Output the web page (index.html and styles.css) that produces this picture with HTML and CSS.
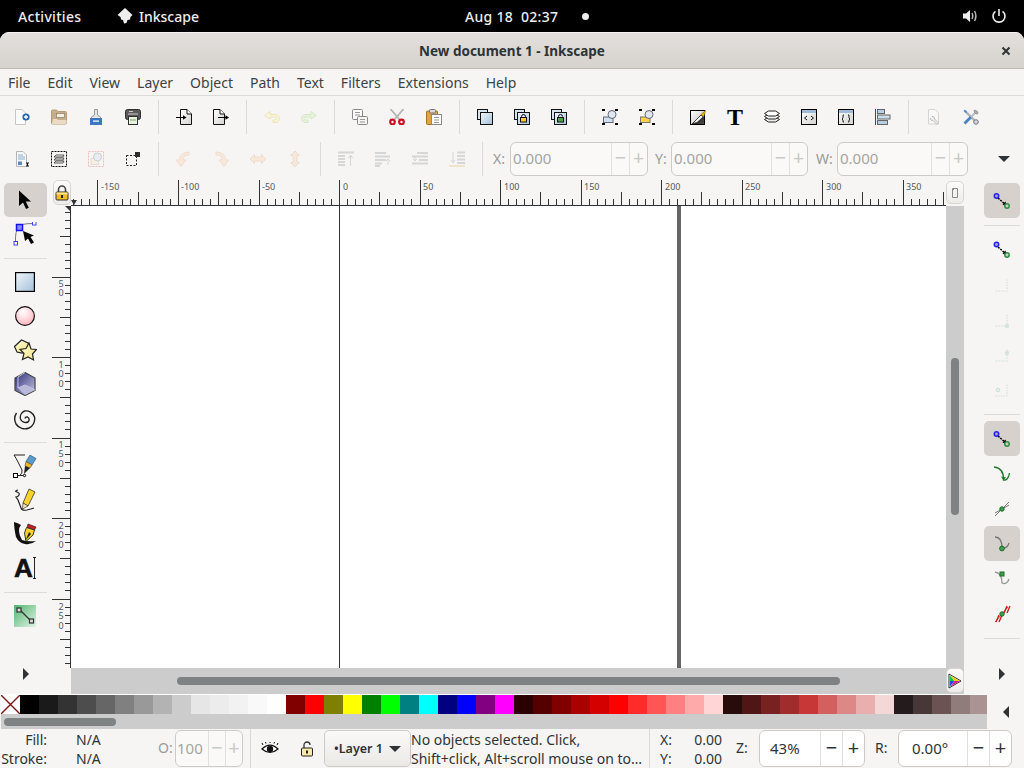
FILE: index.html
```html
<!DOCTYPE html>
<html lang="en">
<head>
  <meta charset="UTF-8">
  <title>New document 1 - Inkscape</title>
  <link rel="stylesheet" href="styles.css">
</head>
<body>

  <svg class="defs" aria-hidden="true">
    <defs>
      <linearGradient id="g-blue" x1="0" y1="0" x2="1" y2="1"><stop offset="0" stop-color="#f2f6fa"/><stop offset="1" stop-color="#a3c0da"/></linearGradient>
      <linearGradient id="g-gray" x1="0" y1="0" x2="1" y2="1"><stop offset="0" stop-color="#fff"/><stop offset="1" stop-color="#d2d2d0"/></linearGradient>
      <linearGradient id="g-green" x1="0" y1="0" x2="1" y2="1"><stop offset="0" stop-color="#4fb56e"/><stop offset="1" stop-color="#e4f3e8"/></linearGradient>
      <linearGradient id="g-pen" x1="0" y1="0" x2="1" y2="1"><stop offset="0" stop-color="#fff"/><stop offset="0.5" stop-color="#ddd"/><stop offset="0.51" stop-color="#222"/><stop offset="1" stop-color="#555"/></linearGradient>
      <radialGradient id="g-pink" cx="0.4" cy="0.3" r="0.8"><stop offset="0" stop-color="#fff"/><stop offset="1" stop-color="#ffadb8"/></radialGradient>
      <linearGradient id="g-star" x1="0" y1="0" x2="1" y2="1"><stop offset="0" stop-color="#fffde0"/><stop offset="1" stop-color="#f5e27a"/></linearGradient>
      <linearGradient id="g-box" x1="0" y1="0" x2="1" y2="1"><stop offset="0" stop-color="#2f2f78"/><stop offset="1" stop-color="#c8c8e4"/></linearGradient>
    </defs>
  </svg>

  <header class="topbar">
    <span class="topbar-item activities">Activities</span>
    <svg class="app-logo" width="16" height="16" viewBox="0 0 16 16"><path d="M8 0l7.500 7-2 2-.5 2.500-2.500.5-1 3-2.500.5-1-3.500-2-.5-.5-2.500L.5 7z" fill="#eee"/></svg>
    <span class="topbar-item app-name">Inkscape</span>
    <span class="topbar-item clock">Aug 18&nbsp; 02:37</span>
    <span class="status-dot"></span>
    <svg class="tray-volume" width="16" height="16" viewBox="0 0 16 16"><path d="M1 5.500h3L8 2v12L4 10.500H1z" fill="#eee"/><path d="M10 5q1.500 3 0 6M12.500 3q2.800 5 0 10" fill="none" stroke="#bbb" stroke-width="1.500"/></svg>
    <svg class="tray-power" width="16" height="16" viewBox="0 0 16 16"><path d="M4.500 3.300a6 6 0 1 0 7 0" fill="none" stroke="#eee" stroke-width="1.600"/><path d="M8 1v7" stroke="#eee" stroke-width="1.600"/></svg>
  </header>

  <div class="window">
    <div class="titlebar">
      <span class="title">New document 1 - Inkscape</span>
      <svg class="close" width="10" height="10" viewBox="0 0 10 10"><path d="M1.500 1.500l7 7M8.500 1.500l-7 7" stroke="#2e3436" stroke-width="2"/></svg>
    </div>

    <nav class="menubar">
      <span class="menu-item">File</span>
      <span class="menu-item">Edit</span>
      <span class="menu-item">View</span>
      <span class="menu-item">Layer</span>
      <span class="menu-item">Object</span>
      <span class="menu-item">Path</span>
      <span class="menu-item">Text</span>
      <span class="menu-item">Filters</span>
      <span class="menu-item">Extensions</span>
      <span class="menu-item">Help</span>
    </nav>

    <!-- commands toolbar -->
    <div class="toolbar">
      <span class="tool"><svg width="16" height="16" viewBox="-1 0 16 16"><path d="M.5.500H7l3.500 3.500v11.500H.5z" fill="#fbfbfb" stroke="#c6c6c6"/><circle cx="11" cy="8" r="3.600" fill="#2566ad"/><path d="M11 6v4M9 8h4" stroke="#fff" stroke-width="1.300"/></svg></span>
      <span class="tool"><svg width="16" height="16" viewBox="0 0 16 16"><path d="M.5 2q0-1 1-1h4l1.500 1.500h7.500q1 0 1 1V14q0 1-1 1h-13q-1 0-1-1z" fill="#c7ae8a" stroke="#b59c78"/><rect x="5.500" y="4.500" width="8" height="4" fill="#f4efe6" stroke="#8d7a5d" stroke-width=".7"/><path d="M1 15l1-5h4l1 1h8.500v3q0 1-1 1z" fill="#eadcc4"/></svg></span>
      <span class="tool"><svg width="16" height="16" viewBox="0 0 16 16"><path d="M6.500.5h3v5.500l3 2v2h-9V8l3-2z" fill="#e4e4e4" stroke="#999"/><path d="M2 9h12v7H2z" fill="#3c76bf"/><path d="M5 11.500h6v1.200H5z" fill="#fff"/></svg></span>
      <span class="tool"><svg width="16" height="16" viewBox="0 0 16 16"><rect x=".5" y=".5" width="15" height="10" rx="2" fill="#5a5a5a" stroke="#2e2e2e"/><path d="M4 2.500h4M3 5h10" stroke="#ccc"/><rect x="3.500" y="7.500" width="9" height="8" fill="#e9f1e2" stroke="#2e2e2e"/><path d="M5 10h6v2H5z" fill="#a9cf9c"/></svg></span>
      <span class="sep"></span>
      <span class="tool"><svg width="16" height="16" viewBox="0 0 16 16"><path d="M4.500.5H11l4.500 4.500v10.500h-11z" fill="url(#g-gray)" stroke="#111"/><path d="M11 .5V5h4.500" fill="#fff" stroke="#111"/><path d="M0 8.500h7" stroke="#000"/><path d="M7 6.300l3.500 2.200L7 10.700z"/></svg></span>
      <span class="tool"><svg width="16" height="16" viewBox="0 0 16 16"><path d="M.5.500H7l4.500 4.500v10.500H.5z" fill="url(#g-gray)" stroke="#111"/><path d="M7 .5V5h4.500" fill="#fff" stroke="#111"/><path d="M5 8.500h8" stroke="#000"/><path d="M12.500 6.300l3.500 2.200-3.500 2.200z"/></svg></span>
      <span class="sep"></span>
      <span class="tool"><svg width="16" height="16" viewBox="0 0 16 16"><path d="M6 2.500L.8 6.500 6 10V8h5q2 0 2 1.500T11 11H9v2.500h3q3.500-.5 3.500-4T11 5.500H6z" fill="#fbf6d9" stroke="#ece3b4"/></svg></span>
      <span class="tool"><svg width="16" height="16" viewBox="0 0 16 16"><path d="M10 2.500l5.200 4-5.200 3.500V8H5q-2 0-2 1.500T5 11h2v2.500H4Q.5 13 .5 9.500T5 5.500h5z" fill="#e8f3dc" stroke="#d3e6c2"/></svg></span>
      <span class="sep"></span>
      <span class="tool"><svg width="16" height="16" viewBox="0 0 16 16"><rect x=".5" y=".5" width="10" height="10" rx="1" fill="#fcfcfc" stroke="#888"/><path d="M3 3.500h5M3 6h5" stroke="#999"/><rect x="5.500" y="7.500" width="10" height="8" rx="1" fill="#f4f4f4" stroke="#888"/><path d="M8 10.500h5M8 13h5" stroke="#999"/></svg></span>
      <span class="tool"><svg width="16" height="16" viewBox="0 0 16 16"><path d="M1.500 0l9 10.500M14.500 0l-9 10.500" stroke="#b3b3b3" stroke-width="1.800"/><circle cx="3.500" cy="13" r="2.300" fill="#fff" stroke="#cc1020" stroke-width="2.200"/><circle cx="12.500" cy="13" r="2.300" fill="#fff" stroke="#cc1020" stroke-width="2.200"/></svg></span>
      <span class="tool"><svg width="16" height="16" viewBox="0 0 16 16"><rect x=".5" y="2" width="11" height="13.500" rx="1" fill="#dfa348" stroke="#a8701c"/><rect x="3.500" y=".5" width="6" height="3.500" rx="1" fill="#d8d8d8" stroke="#777"/><rect x="5.500" y="5.500" width="10" height="10" fill="#fbfbfb" stroke="#888"/><path d="M8 8.500h5M8 11h5M8 13.500h5" stroke="#999"/></svg></span>
      <span class="sep"></span>
      <span class="tool"><svg width="16" height="16" viewBox="0 0 16 16"><rect x=".5" y=".5" width="10" height="10" fill="#d6e4f0" stroke="#111"/><rect x="3.500" y="3.500" width="12" height="12" fill="url(#g-blue)" stroke="#111"/></svg></span>
      <span class="tool"><svg width="16" height="16" viewBox="0 0 16 16"><rect x=".5" y=".5" width="10" height="10" fill="#d6e4f0" stroke="#111"/><rect x="3.500" y="3.500" width="12" height="12" fill="url(#g-blue)" stroke="#111"/><path d="M7.500 8.500v-1a2 2 0 0 1 4 0v1" fill="none" stroke="#111"/><rect x="6.500" y="8.500" width="6" height="4.500" fill="#fc3" stroke="#111"/></svg></span>
      <span class="tool"><svg width="16" height="16" viewBox="0 0 16 16"><rect x=".5" y=".5" width="10" height="10" fill="#d6e4f0" stroke="#111"/><rect x="3.500" y="3.500" width="12" height="12" fill="url(#g-blue)" stroke="#111"/><path d="M7.500 8.500v-1a2 2 0 0 1 4 0" fill="none" stroke="#111"/><rect x="6.500" y="8.500" width="6" height="4.500" fill="#4aa83f" stroke="#111"/></svg></span>
      <span class="sep"></span>
      <span class="tool"><svg width="16" height="16" viewBox="0 0 16 16"><path d="M0 14h3v2H0zM13 14h3v2h-3zM13 0h3v2h-3zM0 0h3v2H0z"/><rect x="1.500" y="8" width="9.500" height="5.500" fill="#cfe0ef" stroke="#667"/><circle cx="10" cy="5.500" r="4" fill="#dfe7f0" stroke="#667"/></svg></span>
      <span class="tool"><svg width="16" height="16" viewBox="0 0 16 16"><path d="M0 14h3v2H0zM13 14h3v2h-3zM13 0h3v2h-3zM0 0h3v2H0z"/><rect x="1.500" y="8" width="9.500" height="5.500" fill="#fbd14b" stroke="#776"/><circle cx="10" cy="5.500" r="4" fill="#dfe7f0" stroke="#667"/></svg></span>
      <span class="sep"></span>
      <span class="tool"><svg width="16" height="16" viewBox="0 0 16 16"><rect x=".5" y="1.500" width="14" height="14" fill="url(#g-pen)" stroke="#000"/><path d="M2.500 14.500L11 6l2 2-6 5.500z" fill="#f4f4f4" stroke="#111" stroke-width=".6"/><path d="M11 5.500L16 1l-2.500 7z" fill="#f5b800" stroke="#8a6500" stroke-width=".4"/></svg></span>
      <span class="tool"><svg width="16" height="16" viewBox="0 0 16 16" class="glyph-t"><text x="8" y="15.500" text-anchor="middle">T</text></svg></span>
      <span class="tool"><svg width="16" height="16" viewBox="0 0 16 16"><path d="M.5 10.500l4-2.500h7l4 2.500-4 2.500h-7z" fill="#eee" stroke="#222"/><path d="M.5 7.500l4-2.500h7l4 2.500-4 2.500h-7z" fill="#f3f3f3" stroke="#222"/><path d="M.5 4.500L4.500 2h7l4 2.500-4 2.500h-7z" fill="#fff" stroke="#222"/></svg></span>
      <span class="tool"><svg width="16" height="16" viewBox="0 0 16 16"><rect x=".5" y=".5" width="15" height="15" fill="url(#g-gray)" stroke="#000"/><path d="M1 1h14v3H1z" fill="#9dbcd8"/><path d="M6 7L3.500 9 6 11M10 7l2.500 2-2.500 2" fill="none" stroke="#111"/></svg></span>
      <span class="tool"><svg width="16" height="16" viewBox="0 0 16 16"><rect x=".5" y=".5" width="15" height="15" fill="url(#g-gray)" stroke="#000"/><path d="M1 1h14v3H1z" fill="#9dbcd8"/><path d="M6 6H5v3l-1 1 1 1v2h1M10 6h1v3l1 1-1 1v2h-1" fill="none" stroke="#111" stroke-width=".9"/></svg></span>
      <span class="tool"><svg width="16" height="16" viewBox="0 0 16 16"><path d="M.5 0v16" stroke="#c01515"/><rect x="2.500" y=".5" width="7" height="4" fill="#b8cfe3" stroke="#666"/><rect x="2.500" y="6" width="12.500" height="4" fill="#cddcea" stroke="#666"/><rect x="2.500" y="11.500" width="10" height="4" fill="#b8cfe3" stroke="#666"/></svg></span>
      <span class="sep"></span>
      <span class="tool"><svg width="16" height="16" viewBox="0 0 16 16"><path d="M2.500.5H9l3.500 3.500v11h-10z" fill="#f8f8f8" stroke="#d5d5d5"/><path d="M6 7.500a2 2 0 0 1 2.500 2.500l4 4-1.500 1.500-4-4A2 2 0 0 1 4.500 9" fill="#eee" stroke="#bbb"/></svg></span>
      <span class="tool"><svg width="16" height="16" viewBox="0 0 16 16"><path d="M2 2l10.500 10.500" stroke="#a9b2ba" stroke-width="2.400"/><path d="M.5 2L2 .5 4 3 3 4z" fill="#4f86bd"/><path d="M1.500 14.500L8 8" stroke="#4a83bd" stroke-width="2.800"/><path d="M8 8l5-5" stroke="#b5bcc2" stroke-width="1.800"/><path d="M11 1.500a3 3 0 0 1 4 3l-2 .5-1.500-1.500z" fill="#aaa" stroke="#778" stroke-width=".6"/><circle cx="13" cy="13" r="2.300" fill="#d5d5d5" stroke="#778"/></svg></span>
    </div>

    <!-- tool controls toolbar -->
    <div class="toolbar">
      <span class="tool"><svg width="16" height="16" viewBox="0 0 16 16"><path d="M2.500.5H9L12.500 4v11.500h-10z" fill="#f5f8fb" stroke="#b5b5b5"/><path d="M4 4h5M4 6h7M4 8h7" stroke="#8eaed0"/><rect x="4" y="10.500" width="4" height="3.500" fill="#5b88b5"/><path d="M12 12h3M13.500 12v3M12 15h3" stroke="#111"/></svg></span>
      <span class="tool"><svg width="16" height="16" viewBox="0 0 16 16"><rect x=".5" y=".5" width="15" height="15" fill="none" stroke="#000" stroke-dasharray="2 1"/><path d="M3 6l2-2h8l-1 2zM3 9l2-2h8l-1 2zM3 12l2-2h8l-1 2z" fill="#f1f1f1" stroke="#333" stroke-width=".8"/></svg></span>
      <span class="tool"><svg width="16" height="16" viewBox="0 0 16 16"><rect x=".5" y=".5" width="15" height="15" fill="none" stroke="#f2bcbc" stroke-dasharray="2 1"/><rect x="3" y="7.500" width="7.500" height="6" fill="#f7f0df" stroke="#ddd"/><circle cx="9.500" cy="6" r="4" fill="#e7edf2" stroke="#ccc"/></svg></span>
      <span class="tool"><svg width="16" height="16" viewBox="0 0 16 16"><rect x="1.500" y="4.500" width="10" height="10" fill="none" stroke="#222" stroke-dasharray="2 1.500"/><rect x="10" y="1" width="5" height="5" fill="#2e2e2e"/></svg></span>
      <span class="sep"></span>
      <span class="tool"><svg width="16" height="16" viewBox="0 0 16 16"><path d="M13 1v3Q7 4 7 9h3l-5 6.500L0 9h3.500Q3.500 1.500 13 1z" fill="#f8e8da" stroke="#f1dccb"/></svg></span>
      <span class="tool"><svg width="16" height="16" viewBox="0 0 16 16"><path d="M3 1v3q6 0 6 5H6l5 6.500L16 9h-3.500Q12.500 1.500 3 1z" fill="#f8e8da" stroke="#f1dccb"/></svg></span>
      <span class="tool"><svg width="16" height="16" viewBox="0 0 16 16"><path d="M0 8l4.500-4.500V6h7V3.500L16 8l-4.500 4.500V10h-7v2.500z" fill="#f8e8da" stroke="#eedcca"/></svg></span>
      <span class="tool"><svg width="16" height="16" viewBox="0 0 16 16"><path d="M8 0l4.500 4.500H10v7h2.500L8 16l-4.500-4.500H6v-7H3.500z" fill="#f8e8da" stroke="#eedcca"/></svg></span>
      <span class="sep"></span>
      <span class="tool"><svg width="16" height="16" viewBox="0 0 16 16"><path d="M0 1.500h16M0 5h7M0 8h7M0 11h7M0 14h7" stroke="#d6d6d6" stroke-width="2"/><path d="M12.500 15V5M10.500 7l2-3 2 3" fill="none" stroke="#d6d6d6"/></svg></span>
      <span class="tool"><svg width="16" height="16" viewBox="0 0 16 16"><path d="M0 2h11M0 5.500h15M0 9h11M0 12.500h7M0 15h5" stroke="#d6d6d6" stroke-width="1.800"/><path d="M13 8v6M11 10l2-2 2 2" fill="none" stroke="#d6d6d6"/></svg></span>
      <span class="tool"><svg width="16" height="16" viewBox="0 0 16 16"><path d="M5 2h11M0 5.500h16M7 9h9M0 12.500h16" stroke="#d6d6d6" stroke-width="1.800"/><path d="M3 5v5M1 8l2 2 2-2" fill="none" stroke="#d6d6d6"/></svg></span>
      <span class="tool"><svg width="16" height="16" viewBox="0 0 16 16"><path d="M8 1.500h8M8 5h8M8 8.500h8M8 12h8" stroke="#d6d6d6" stroke-width="1.800"/><path d="M0 15h16" stroke="#efe3cc" stroke-width="2"/><path d="M4 1v10M2 9l2 3 2-3" fill="none" stroke="#d6d6d6"/></svg></span>
      <span class="sep"></span>
      <span class="field-label label-x">X:</span>
      <div class="spin spin-off spin-x"><span class="spin-value">0.000</span><span class="spin-btn">&minus;</span><span class="spin-btn">+</span></div>
      <span class="field-label label-y">Y:</span>
      <div class="spin spin-off spin-y"><span class="spin-value">0.000</span><span class="spin-btn">&minus;</span><span class="spin-btn">+</span></div>
      <span class="field-label label-w">W:</span>
      <div class="spin spin-off spin-w"><span class="spin-value">0.000</span><span class="spin-btn">&minus;</span><span class="spin-btn">+</span></div>
      <span class="tri tri-down overflow-arrow"></span>
    </div>

    <div class="workspace">
      <!-- left tools -->
      <aside class="toolbox toolbox-left">
        <span class="box-tool active"><svg width="24" height="24" viewBox="0 0 24 24"><path d="M6 2.500V18l4-3.500 3 6.500 2.800-1.200-3-6.300H18z"/></svg></span>
        <span class="box-tool"><svg width="24" height="24" viewBox="0 0 24 24"><path d="M6 5Q7 1.500 20 1.500M6 5Q2 9 2.500 19" fill="none" stroke="#777"/><rect x="3.500" y="2.500" width="6" height="6" fill="#8a8aff" stroke="#1010f0" stroke-width="1.500"/><rect x="19.500" y="-.5" width="3.500" height="3.500" fill="#fff" stroke="#4040ff"/><rect x="1" y="19.500" width="3.500" height="3.500" fill="#fff" stroke="#4040ff"/><path d="M10 9l11 4.500-3.500 1.500 3.500 5.500-3 1.500-3-5.500L12 19z"/></svg></span>
        <span class="box-sep"></span>
        <span class="box-tool"><svg width="24" height="24" viewBox="0 0 24 24"><rect x="2.600" y="2.600" width="18.800" height="18.800" fill="url(#g-blue)" stroke="#000" stroke-width="1.200"/></svg></span>
        <span class="box-tool"><svg width="24" height="24" viewBox="0 0 24 24"><circle cx="12" cy="12" r="9.400" fill="url(#g-pink)" stroke="#111" stroke-width="1.200"/></svg></span>
        <span class="box-tool"><svg width="24" height="24" viewBox="0 0 24 24"><path d="M1.500 8.500L8.500 2l6.500 3 2 6-8 4-5-1z" fill="url(#g-star)" stroke="#222" stroke-width="1.200"/><path d="M16 5l2 6 5.500.5-4 4.500 1 6-5.500-3-5.500 2.500 1.500-6-4-4 6-1z" fill="url(#g-star)" stroke="#222" stroke-width="1.200"/></svg></span>
        <span class="box-tool"><svg width="24" height="24" viewBox="0 0 24 24"><path d="M12 .5l10 5.500v12.500L12 23.500 2 18.500V6z" fill="url(#g-box)" stroke="#444" stroke-width="1.200"/><path d="M12 .5L5 5v11l7-3 10 5" fill="none" stroke="#e2e2f2" stroke-width=".8"/><path d="M5 16l7-3 10 5-10 5z" fill="#b9b9dc"/></svg></span>
        <span class="box-tool"><svg width="24" height="24" viewBox="0 0 24 24"><path d="M12 12.500a2 2 0 0 1 2.500-1.500 3 3 0 0 1 .5 5 5.500 5.500 0 0 1-7.500-3 7 7 0 0 1 4-8 9 9 0 0 1 10 6 10 10 0 0 1-5.500 11 10.500 10.500 0 0 1-13-4 11 11 0 0 1 .5-11" fill="none" stroke="#222" stroke-width="1.400"/></svg></span>
        <span class="box-sep"></span>
        <span class="box-tool"><svg width="24" height="24" viewBox="0 0 24 24"><path d="M1 1h11M1 1q2 3 4 7t4 8q1 4-3 6" fill="none" stroke="#222"/><rect x=".5" y="19.500" width="4" height="4" fill="#fff" stroke="#000"/><path d="M4.500 21.500h6" stroke="#222"/><circle cx="11.500" cy="21.500" r="1.200" fill="#fff" stroke="#000"/><path d="M17 1l6 3.500-4 6.500-6-3.500z" fill="#5c9ac8" stroke="#2f5f80" stroke-width=".7"/><path d="M13 7.500l6 3.500-2 3-5-2z" fill="#f6b420" stroke="#555" stroke-width=".7"/><path d="M12 12l5 2-6 6z" fill="#222"/></svg></span>
        <span class="box-tool"><svg width="24" height="24" viewBox="0 0 24 24"><path d="M5 2q-4 1-1 2t2 3-3 2l2 3q2 5 3 8t6 2q4-1 7-2" fill="none" stroke="#222" stroke-width="1.200"/><path d="M16 1l6 3-7 14-5-3z" fill="#fbd32c" stroke="#333" stroke-width=".8"/><path d="M10 15l5 3-5.500 3z" fill="#f7e6bc" stroke="#333" stroke-width=".7"/></svg></span>
        <span class="box-tool"><svg width="24" height="24" viewBox="0 0 24 24"><path d="M1 0q4 1 7 3-2 2-2 6t3 9q5 2 14 1-5 4-11 3T3 15Q1 6 1 0z" fill="#111"/><path d="M15 2l8 3-1.500 3-7.500-2.500z" fill="#c81e1e" stroke="#222" stroke-width=".7"/><path d="M13.500 5.500L21.500 8 20 13l-7 6.500L11.500 11z" fill="#fbd32c" stroke="#222" stroke-width=".9"/><path d="M16 10l-3.500 8.500L18 12z" fill="#222"/></svg></span>
        <span class="box-tool"><svg width="24" height="24" viewBox="0 0 24 24" class="glyph-a"><text x="10.500" y="21" text-anchor="middle">A</text><path d="M20 1.500h3M21.500 1.500v21M20 22.500h3" fill="none" stroke="#111" stroke-width=".9"/></svg></span>
        <span class="box-sep"></span>
        <span class="box-tool"><svg width="24" height="24" viewBox="0 0 24 24"><rect x="1" y="1" width="22" height="22" fill="url(#g-green)"/><path d="M6 5l13 13" stroke="#333" stroke-width="1.200"/><rect x="4" y="4" width="4" height="4" fill="#ddd" stroke="#333" stroke-width="1.200"/><rect x="16.500" y="15" width="4" height="4" fill="#ddd" stroke="#333" stroke-width="1.200"/></svg></span>
        <span class="tool-more"><span class="tri tri-right"></span></span>
      </aside>

      <div class="stage">
        <span class="corner-btn lock-btn"><svg width="14" height="16" viewBox="0 0 14 16"><path d="M3.500 7V4.500a3.500 3.500 0 0 1 7 0V7" fill="none" stroke="#444" stroke-width="1.600"/><rect x="1" y="7" width="12" height="8" rx="1" fill="#f5b921" stroke="#333"/><path d="M1.500 7.500h11v2h-11z" fill="#fde28a"/><rect x="6" y="10" width="2" height="3" fill="#222"/></svg></span>

        <svg class="ruler-h" width="875" height="26" viewBox="0 0 875 26">
          <path id="ticks-h" fill="none" stroke="#2e3436" shape-rendering="crispEdges"/>
          <path d="M0 25.500h875" stroke="#2e3436"/>
          <path d="M0 20l6 0-3 5z" fill="#2e3436"/>
          <g class="ruler-nums">
            <text x="30" y="10">-150</text>
            <text x="110" y="10">-100</text>
            <text x="191" y="10">-50</text>
            <text x="272" y="10">0</text>
            <text x="352" y="10">50</text>
            <text x="433" y="10">100</text>
            <text x="513" y="10">150</text>
            <text x="594" y="10">200</text>
            <text x="674" y="10">250</text>
            <text x="755" y="10">300</text>
            <text x="835" y="10">350</text>
          </g>
        </svg>

        <span class="corner-cell"><span class="corner-btn page-btn"><svg width="12" height="12" viewBox="0 0 12 12"><path d="M3.500 1.500h5v9h-5zM3 4l2-2" fill="#f3f3f3" stroke="#888"/></svg></span></span>

        <svg class="ruler-v" width="21" height="462" viewBox="0 0 21 462">
          <path id="ticks-v" fill="none" stroke="#2e3436" shape-rendering="crispEdges"/>
          <path d="M20.500 0v462" stroke="#2e3436"/>
          <path d="M15 0h5v5z" fill="#2e3436"/>
          <g class="ruler-nums ruler-nums-v">
            <text x="11" y="71">50</text>
            <text x="11" y="152">100</text>
            <text x="11" y="232">150</text>
            <text x="11" y="313">200</text>
            <text x="11" y="394">250</text>
          </g>
        </svg>

        <div class="canvas">
          <span class="page-left"></span>
          <span class="page-right"></span>
        </div>

        <div class="vscroll"><span class="vthumb"></span></div>
        <span class="stage-gap"></span>
        <div class="hscroll"><span class="hthumb"></span></div>
        <span class="corner-cell corner-cell-grey"><span class="corner-btn color-btn"><svg width="14" height="16" viewBox="0 0 14 16"><path d="M1 1l12 7-12 7z" fill="#fff" stroke="#333"/><path d="M2 2.500L6.500 8H2z" fill="#16c83a"/><path d="M2 8h4.500L2 13.500z" fill="#2448e8"/><path d="M2.500 2.500L12 8H6.500z" fill="#f2c80f"/><path d="M6.500 8H12l-9.500 5.500z" fill="#d4158e"/></svg></span></span>
      </div>

      <!-- snap bar -->
      <aside class="toolbox toolbox-right">
        <span class="snap-tool active"><svg width="24" height="24" viewBox="0 0 24 24"><path d="M8 9l8 7" stroke="#000" stroke-width="1.500" stroke-dasharray="2 1"/><path d="M12.500 15.500l3-3 1.500 5z"/><circle cx="6.500" cy="7" r="2.200" fill="#aab" stroke="#2222ee" stroke-width="1.500"/><circle cx="17" cy="17" r="2.200" fill="#ccc" stroke="#2f8f3f" stroke-width="1.500"/></svg></span>
        <span class="box-sep snap-sep"></span>
        <span class="snap-tool"><svg width="24" height="24" viewBox="0 0 24 24"><path d="M8 9l8 7" stroke="#000" stroke-width="1.500" stroke-dasharray="2 1"/><path d="M12.500 15.500l3-3 1.500 5z"/><circle cx="6.500" cy="6.500" r="2.200" fill="#aab" stroke="#2222ee" stroke-width="1.500"/><circle cx="17" cy="17" r="2.200" fill="#ccc" stroke="#2f8f3f" stroke-width="1.500"/></svg></span>
        <span class="snap-tool"><svg width="24" height="24" viewBox="0 0 24 24"><path d="M5.500 18h11.500V5.500" fill="none" stroke="#dde5dd" stroke-width="1.500" stroke-dasharray="1.500 1.200"/></svg></span>
        <span class="snap-tool"><svg width="24" height="24" viewBox="0 0 24 24"><path d="M5.500 18h11.500V5.500" fill="none" stroke="#dde5dd" stroke-width="1.500" stroke-dasharray="1.500 1.200"/><circle cx="17" cy="18" r="2.200" fill="#d5e6d8"/></svg></span>
        <span class="snap-tool"><svg width="24" height="24" viewBox="0 0 24 24"><path d="M5.500 18h11.500V5.500" fill="none" stroke="#dde5dd" stroke-width="1.500" stroke-dasharray="1.500 1.200"/><circle cx="17" cy="10" r="2.200" fill="#d5e6d8"/></svg></span>
        <span class="snap-tool"><svg width="24" height="24" viewBox="0 0 24 24"><path d="M5.500 18h11.500V5.500" fill="none" stroke="#dde5dd" stroke-width="1.500" stroke-dasharray="1.500 1.200"/><circle cx="8" cy="12" r="1.800" fill="#e8f0ea" stroke="#cde0d2"/></svg></span>
        <span class="box-sep snap-sep"></span>
        <span class="snap-tool active"><svg width="24" height="24" viewBox="0 0 24 24"><path d="M8 9l8 7" stroke="#000" stroke-width="1.500" stroke-dasharray="2 1"/><path d="M12.500 15.500l3-3 1.500 5z"/><circle cx="6.500" cy="7" r="2.200" fill="#aab" stroke="#2222ee" stroke-width="1.500"/><circle cx="17" cy="17" r="2.200" fill="#ccc" stroke="#2f8f3f" stroke-width="1.500"/></svg></span>
        <span class="snap-tool"><svg width="24" height="24" viewBox="0 0 24 24"><path d="M4 5Q14 6 13.500 18Q18 19 19.500 11" fill="none" stroke="#1e7a2a" stroke-width="1.300"/><path d="M11 14.500l2.500 4 2.500-3z" fill="#1e7a2a"/></svg></span>
        <span class="snap-tool"><svg width="24" height="24" viewBox="0 0 24 24"><path d="M5 19L19 5M5 16l14-8" stroke="#777"/><circle cx="12" cy="12" r="2.200" fill="#3f9f4f" stroke="#1e6a2a"/></svg></span>
        <span class="snap-tool active"><svg width="24" height="24" viewBox="0 0 24 24"><path d="M5 5Q12 5 12 16Q17 17 19 11" fill="none" stroke="#777" stroke-width="1.300"/><circle cx="12" cy="16.500" r="2.400" fill="#3f9f4f" stroke="#1e6a2a"/></svg></span>
        <span class="snap-tool"><svg width="24" height="24" viewBox="0 0 24 24"><path d="M5 5Q12 6 12 16Q17 18 19 12" fill="none" stroke="#999" stroke-width="1.300"/><rect x="10" y="5" width="4" height="4" fill="#3f9f4f" stroke="#1e6a2a"/></svg></span>
        <span class="snap-tool"><svg width="24" height="24" viewBox="0 0 24 24"><path d="M5 20L18 5" stroke="#666"/><path d="M6 20l3-7M9 20l3-7M14 11l3-7M17 11l3-7" stroke="#d81e1e" stroke-width="1.400"/><circle cx="12" cy="12" r="2.200" fill="#3f9f4f" stroke="#1e6a2a"/></svg></span>
        <span class="box-sep snap-sep"></span>
        <span class="tool-more"><span class="tri tri-right"></span></span>
      </aside>
    </div>

    <div class="palette-row">
      <div class="palette-wrap">
        <div class="palette" id="palette">
          <span class="swatch-none"><svg width="19" height="19" viewBox="0 0 19 19"><path d="M0 0l19 19M19 0L0 19" stroke="#7c1414" stroke-width="1.400"/></svg></span>
        </div>
        <div class="palette-scroll"><span class="palette-thumb"></span></div>
      </div>
      <div class="palette-more"><span class="tri tri-left"></span></div>
    </div>

    <footer class="statusbar">
      <div class="style-info">
        <span class="style-key">Fill:</span><span class="style-val">N/A</span>
        <span class="style-key">Stroke:</span><span class="style-val">N/A</span>
      </div>
      <span class="field-label label-o">O:</span>
      <div class="spin spin-off spin-o"><span class="spin-value">100</span><span class="spin-btn">&minus;</span><span class="spin-btn">+</span></div>
      <span class="status-sep status-sep-first"></span>
      <svg class="eye" width="18" height="14" viewBox="0 0 18 14"><path d="M1 7q8-8 16 0-8 7-16 0z" fill="#fff" stroke="#111" stroke-width="1.200"/><circle cx="9" cy="7" r="3.200" fill="#111"/><path d="M2 3L1 1M5 1.500L4.500 0M9 1V0M13 1.500l.5-1.500M16 3l1-2" stroke="#111"/></svg>
      <svg class="padlock" width="14" height="16" viewBox="0 0 14 16"><path d="M4 7V4a3 3 0 0 1 6 0" fill="none" stroke="#333" stroke-width="1.300"/><rect x="1.500" y="7" width="11" height="8" rx="1" fill="#fbe8a8" stroke="#222"/><rect x="6" y="9.500" width="2" height="3" fill="#222"/></svg>
      <div class="layer-btn"><span class="layer-name">&bull;Layer 1</span><span class="tri tri-down"></span></div>
      <div class="message">No objects selected. Click,<br>Shift+click, Alt+scroll mouse on to&hellip;</div>
      <span class="status-sep"></span>
      <div class="coords">
        <span>X:</span><span class="coord-val">0.00</span>
        <span>Y:</span><span class="coord-val">0.00</span>
      </div>
      <span class="field-label label-z">Z:</span>
      <div class="spin spin-z"><span class="spin-value">43%</span><span class="spin-btn">&minus;</span><span class="spin-btn">+</span></div>
      <span class="field-label label-r">R:</span>
      <div class="spin spin-r"><span class="spin-value">0.00&deg;</span><span class="spin-btn">&minus;</span><span class="spin-btn">+</span></div>
    </footer>
  </div>

  <script src="app.js"></script>
</body>
</html>
```

FILE: styles.css
```css
* { box-sizing: border-box; }
html, body { margin: 0; height: 100%; }
body { width: 1024px; height: 768px; overflow: hidden; background: #000; font-family: "Noto Sans", "Open Sans", sans-serif; font-size: 14px; color: #2e3436; }
svg { display: block; flex: none; }
.defs { width: 0; height: 0; }

/* gnome top bar */
.topbar { height: 32px; display: flex; align-items: center; color: #eeeeec; }
.topbar-item { font-weight: 500; white-space: nowrap; }
.activities { margin-left: 18px; width: 99px; letter-spacing: .3px; }
.app-name { margin-left: 6px; width: 326px; }
.clock { width: 117px; letter-spacing: .3px; }
.status-dot { width: 7px; height: 7px; border-radius: 50%; background: #eeeeec; }
.tray-volume { margin-left: 373px; }
.tray-power { margin-left: 13px; }

/* window */
.window { height: 736px; background: #f6f5f4; border-radius: 9px 9px 0 0; overflow: hidden; display: flex; flex-direction: column; }
.titlebar { height: 37px; flex: none; display: flex; align-items: center; justify-content: center; background: linear-gradient(#e2dfdc, #d6d3ce); border-top: 1px solid #f4f3f1; border-bottom: 1px solid #bfb8b0; }
.title { flex: 1; text-align: center; padding-left: 23px; font-weight: 700; font-size: 13.500px; }
.close { margin-right: 13px; }
.menubar { height: 27px; flex: none; display: flex; align-items: center; padding-left: 8px; gap: 17px; border-bottom: 1px solid #dedbd7; color: #3d4245; }
.toolbar { height: 42px; flex: none; display: flex; align-items: center; padding-left: 3px; }
.tool { width: 37px; display: flex; justify-content: center; flex: none; }
.sep { width: 14px; height: 34px; flex: none; background: linear-gradient(#dcdad6, #dcdad6) center / 1px 100% no-repeat; }
.glyph-t { overflow: visible; }
.glyph-a { overflow: visible; }
.glyph-t text { font-family: "Liberation Serif", serif; font-weight: 700; font-size: 24px; fill: #000; }
.glyph-a text { font-family: "Liberation Sans", sans-serif; font-weight: 700; font-size: 26px; fill: #111; stroke: #111; stroke-width: .6px; }

/* spin buttons */
.field-label { color: #9a9a97; flex: none; padding-bottom: 2px; }
.spin { height: 34px; display: flex; flex: none; border: 1px solid #cfcac5; border-radius: 6px; background: #fff; font-size: 15px; }
.spin-value { flex: 1; align-self: center; padding: 0 0 2px 2px; white-space: nowrap; }
.spin-btn { width: 18px; flex: none; display: flex; align-items: center; justify-content: center; border-left: 1px solid #e2dfdc; font-size: 20px; line-height: 1; color: #2e3436; padding-bottom: 2px; }
.spin-off { background: #faf9f8; color: #a5a5a2; }
.spin-off .spin-btn { color: #c9c9c6; }
.label-x { margin-left: 4px; width: 17px; }
.label-y { margin-left: 7px; width: 16px; }
.label-w { margin-left: 8px; width: 21px; }
.spin-x { width: 138px; }
.spin-y { width: 137px; }
.spin-w { width: 131px; }
.overflow-arrow { margin-left: 30px; }

/* css triangles */
.tri { display: block; width: 0; height: 0; flex: none; border-style: solid; border-color: transparent; }
.tri-down { border-width: 6px 6px 0; border-top-color: #2e3436; }
.tri-right { border-width: 6px 0 6px 6px; border-left-color: #2e3436; }
.tri-left { border-width: 6px 6px 6px 0; border-right-color: #2e3436; }

/* main area */
.workspace { height: 514px; flex: none; display: flex; }
.toolbox { flex: none; display: flex; flex-direction: column; padding-top: 3px; }
.toolbox-left { width: 50px; padding-left: 4px; }
.toolbox-right { width: 60px; padding-left: 20px; }
.box-tool { width: 43px; height: 34px; flex: none; display: flex; align-items: center; justify-content: center; border-radius: 5px; padding-right: 1px; }
.snap-tool { width: 36px; height: 35px; flex: none; display: flex; align-items: center; justify-content: center; border-radius: 5px; }
.active { background: #d6d1cd; }
.box-sep { width: 43px; height: 14px; flex: none; background: linear-gradient(#dedbd7, #dedbd7) center / 100% 1px no-repeat; }
.snap-sep { width: 36px; }
.tool-more { margin-top: auto; width: 36px; height: 40px; display: flex; align-items: center; justify-content: center; }
.toolbox-left .tool-more { width: 43px; }

.stage { flex: none; width: 914px; display: grid; grid-template-columns: 21px 875px 18px; grid-template-rows: 26px 462px 26px; }
.corner-btn { display: flex; align-items: center; justify-content: center; border: 1px solid #d8d4d0; border-radius: 5px; background: linear-gradient(#fbfbfa, #eeecea); }
.lock-btn { width: 18px; height: 25px; margin-left: 3px; }
.corner-cell { display: flex; }
.corner-cell-grey { background: #ccc; }
.page-btn { width: 18px; height: 23px; margin-top: 1px; }
.color-btn { width: 18px; height: 25px; }
.ruler-nums text { font-size: 9px; fill: #555a5c; font-family: "Noto Sans", sans-serif; }
.ruler-nums-v text { writing-mode: vertical-rl; text-orientation: upright; letter-spacing: -3.700px; }
.canvas { position: relative; background: #fff; }
.page-left { position: absolute; left: 268px; top: 0; bottom: 0; width: 1px; background: #333; }
.page-right { position: absolute; left: 606px; top: 0; bottom: 0; width: 4px; background: #666; }
.vscroll { background: #ccc; padding: 152px 5px 0; }
.vthumb { display: block; width: 8px; height: 157px; border-radius: 4px; background: #7e8282; }
.stage-gap { background: #f6f5f4; }
.hscroll { background: #ccc; padding: 9px 0 0 106px; }
.hthumb { display: block; width: 663px; height: 8px; border-radius: 4px; background: #7e8282; }

/* palette */
.palette-row { height: 35px; flex: none; display: flex; }
.palette-wrap { width: 987px; flex: none; padding-left: 1px; display: flex; flex-direction: column; }
.palette { height: 20px; padding-top: 1px; flex: none; display: flex; overflow: hidden; background: #fff; }
.palette span { width: 19px; height: 19px; flex: none; display: block; }
.palette-scroll { flex: 1; background: #ccc; padding: 4px 0 0 3px; }
.palette-thumb { display: block; width: 112px; height: 8px; border-radius: 4px; background: #7e8282; }
.palette-more { flex: 1; display: flex; align-items: center; justify-content: center; padding-top: 1px; }

/* status bar */
.statusbar { height: 39px; flex: none; display: flex; align-items: center; }
.style-info { width: 158px; flex: none; display: grid; grid-template-columns: 47px 1fr; column-gap: 29px; line-height: 19px; }
.style-key { text-align: right; }
.label-o { width: 17px; }
.spin-o { width: 68px; height: 37px; font-size: 15px; }
.spin-o .spin-btn { width: 17px; }
.spin-o .spin-value { padding-left: 1px; }
.status-sep { width: 1px; height: 39px; flex: none; background: #dcd9d5; }
.status-sep-first { margin-left: 7px; }
.eye { margin-left: 10px; }
.padlock { margin-left: 21px; }
.layer-btn { width: 87px; height: 37px; margin-left: 10px; flex: none; display: flex; align-items: center; justify-content: center; gap: 6px; border: 1px solid #cfcac5; border-radius: 5px; background: linear-gradient(#faf9f8, #ebe9e6); font-size: 12.500px; font-weight: 600; }
.message { width: 238px; flex: none; line-height: 19px; white-space: nowrap; overflow: hidden; }
.coords { width: 62px; margin-left: 10px; flex: none; display: grid; grid-template-columns: 1fr auto; line-height: 19px; }
.coord-val { text-align: right; }
.label-z { width: 23px; margin-left: 14px; color: #2e3436; }
.spin-z { width: 106px; height: 37px; }
.spin-z .spin-value { padding-left: 10px; }
.spin-z .spin-btn, .spin-r .spin-btn { width: 22px; }
.label-r { width: 23px; margin-left: 10px; color: #2e3436; }
.spin-r { width: 114px; height: 37px; }
.spin-r .spin-value { padding-left: 13px; }
```

FILE: app.js
```js
// ruler ticks, 50 units = 80.5px, 10 subdivisions
var STEP = 8.05;

function buildTicks(zero, length, line) {
  var d = "";
  var first = Math.ceil(-zero / STEP);
  for (var i = first; zero + i * STEP < length; i++) {
    var pos = Math.round(zero + i * STEP) + 0.5;
    var mod = ((i % 10) + 10) % 10;
    d += line(pos, mod === 0 ? 2 : mod === 5 ? 1 : 0);
  }
  return d;
}

// zero of the horizontal ruler sits at page x 339, of the vertical at y 196
document.getElementById("ticks-h").setAttribute("d", buildTicks(268, 875, function (x, kind) {
  var h = [6, 13, 25][kind];
  return "M" + x + " 25V" + (25 - h);
}));
document.getElementById("ticks-v").setAttribute("d", buildTicks(-10, 462, function (y, kind) {
  var w = [5, 10, 18][kind];
  return "M20 " + y + "H" + (20 - w);
}));

// palette swatches
var colors = [
  "#000000", "#1a1a1a", "#333333", "#4d4d4d", "#666666", "#808080", "#999999", "#b3b3b3", "#cccccc",
  "#e6e6e6", "#ececec", "#f2f2f2", "#f9f9f9", "#ffffff",
  "#800000", "#ff0000", "#808000", "#ffff00", "#008000", "#00ff00", "#008080", "#00ffff", "#000080", "#0000ff", "#800080", "#ff00ff",
  "#2b0000", "#550000", "#800000", "#aa0000", "#d40000", "#ff0000", "#ff2a2a", "#ff5555", "#ff8080", "#ffaaaa", "#ffd5d5",
  "#280b0b", "#501616", "#782121", "#a02c2c", "#c83737", "#d35f5f", "#de8787", "#e9afaf", "#f4d7d7",
  "#241c1c", "#483737", "#6c5353", "#917c7c", "#ac9393"
];
var palette = document.getElementById("palette");
colors.forEach(function (c) {
  var s = document.createElement("span");
  s.style.background = c;
  palette.appendChild(s);
});
```
